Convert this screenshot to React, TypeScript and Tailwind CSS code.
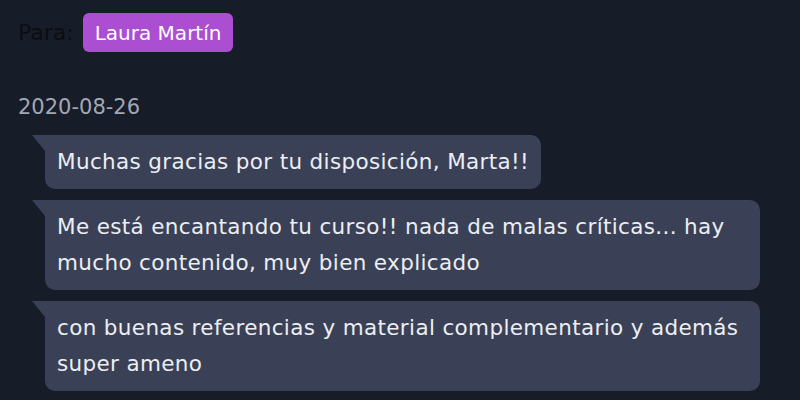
const messages = [
  'Muchas gracias por tu disposición, Marta!!',
  'Me está encantando tu curso!! nada de malas críticas... hay mucho contenido, muy bien explicado',
  'con buenas referencias y material complementario y además super ameno',
];

function Bubble({ text }: { text: string }) {
  return (
    <div className="relative self-start max-w-[715px] rounded-[10px] rounded-tl-none bg-[#3a4156] px-3 py-[9px] text-[21.5px] leading-[36px] tracking-[0.35px] text-[#eceef3]">
      {/* tail */}
      <svg className="absolute -left-[13px] top-0" width="13" height="16" viewBox="0 0 13 16">
        <polygon points="0,0 13,0 13,16" fill="#3a4156" />
      </svg>
      {text}
    </div>
  );
}

export default function App() {
  return (
    <main className="min-h-screen w-[800px] h-[400px] overflow-hidden bg-[#171c29] font-['DejaVu_Sans',sans-serif]">
      <div className="flex items-center gap-[9px] pl-[18px] pt-[13px]">
        <span className="text-[22px] text-[#0b0d12]">Para:</span>
        <span className="rounded-md bg-[#ab4ed1] px-3 h-[39px] flex items-center text-[20px] text-white">
          Laura Martín
        </span>
      </div>

      <div className="pl-[18px] pt-[40px] text-[21px] leading-[30px] text-[#a3a7b3]">2020-08-26</div>

      <div className="mt-[13px] flex flex-col gap-[11px] pl-[45px]">
        {messages.map((m) => (
          <Bubble key={m} text={m} />
        ))}
      </div>
    </main>
  );
}
